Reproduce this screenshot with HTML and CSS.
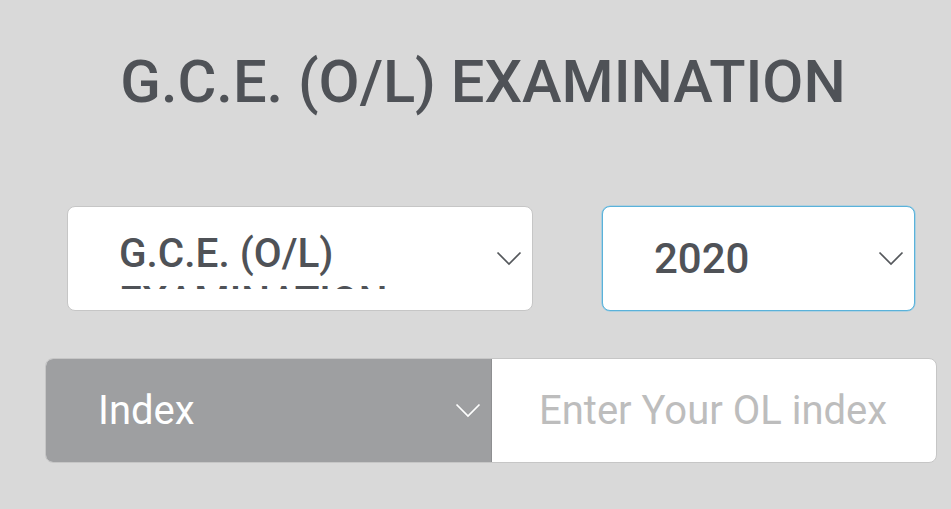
FILE: index.html
```html
<!DOCTYPE html>
<html>
<head>
<meta charset="utf-8">
<link rel="stylesheet" href="styles.css">
</head>
<body>
<div class="page">
  <h1 class="title">G.C.E. (O/L) EXAMINATION</h1>
  <div class="selects">
    <div class="select select-exam">
      <div class="select-text clip">G.C.E. (O/L) EXAMINATION</div>
      <svg class="chev" width="26" height="15" viewBox="0 0 26 15"><polyline points="1.5,1.5 13,13 24.5,1.5" fill="none" stroke="#55585c" stroke-width="1.7"/></svg>
    </div>
    <div class="select select-year">
      <div class="select-text">2020</div>
      <svg class="chev" width="26" height="15" viewBox="0 0 26 15"><polyline points="1.5,1.5 13,13 24.5,1.5" fill="none" stroke="#55585c" stroke-width="1.7"/></svg>
    </div>
  </div>
  <div class="index-row">
    <div class="index-type">
      <span class="index-label">Index</span>
      <svg class="chev" width="26" height="15" viewBox="0 0 26 15"><polyline points="1.5,1.5 13,13 24.5,1.5" fill="none" stroke="#ffffff" stroke-width="1.7"/></svg>
    </div>
    <div class="index-input">
      <span class="placeholder">Enter Your OL index</span>
    </div>
  </div>
</div>
</body>
</html>
```

FILE: styles.css
```css
html, body {
  margin: 0;
  padding: 0;
  background: #d9d9d9;
}
body {
  font-family: Roboto, "Liberation Sans", sans-serif;
  width: 951px;
  height: 509px;
  overflow: hidden;
}
.page {
  padding: 47px 14px 0 45px;
}
.title {
  margin: 0;
  padding-right: 16px;
  font-size: 59.6px;
  font-weight: 500;
  line-height: normal;
  text-align: center;
  color: #4f5257;
}
.selects {
  display: flex;
  gap: 69px;
  padding: 0 22px;
  margin-top: 89px;
}
.select {
  box-sizing: border-box;
  height: 105px;
  background: #ffffff;
  border: 1px solid #c6c6c6;
  border-radius: 8px;
  display: flex;
  align-items: center;
  padding: 0 10px 0 51px;
  color: #4f5257;
  font-size: 42px;
  font-weight: 500;
}
.select-exam {
  width: 466px;
  align-items: flex-start;
  font-size: 40.5px;
}
.select-exam .chev {
  align-self: center;
}
.select-year {
  flex: 1;
  border-color: #5ab2da;
  box-shadow: 0 0 0 0.6px #8cc8e4;
}
.select-text {
  flex: 1;
  line-height: normal;
}
.clip {
  margin-top: 22px;
  height: 60px;
  overflow: hidden;
  padding-right: 120px;
}
.chev {
  flex: none;
}
.index-row {
  display: flex;
  margin-top: 47px;
  height: 105px;
  box-sizing: border-box;
  border: 1px solid #c6c6c6;
  border-radius: 8px;
  overflow: hidden;
  background: #ffffff;
  font-size: 40px;
  font-weight: 400;
}
.index-type {
  box-sizing: border-box;
  width: 446px;
  background: #9e9fa1;
  border-right: 1px solid #8e8f91;
  display: flex;
  align-items: center;
  padding: 0 10px 0 52px;
  color: #ffffff;
}
.index-label {
  flex: 1;
}
.index-input {
  flex: 1;
  display: flex;
  align-items: center;
  padding-left: 47px;
}
.placeholder {
  color: #bdbdbd;
}
```
